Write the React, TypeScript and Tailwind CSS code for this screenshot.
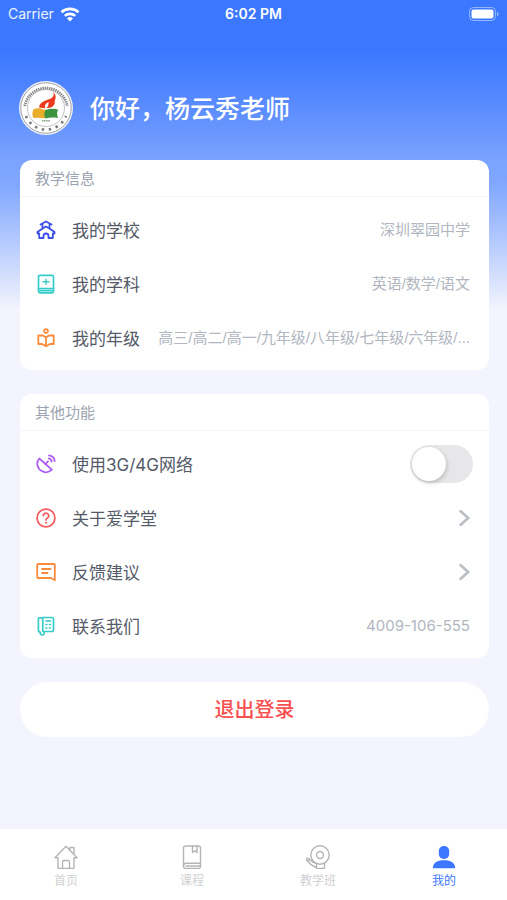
import type { ReactNode } from "react";

const stroke = {
  fill: "none",
  stroke: "currentColor",
  strokeLinecap: "round",
  strokeLinejoin: "round",
} as const;

function SchoolIcon() {
  return (
    <svg viewBox="0 0 20 20" className="size-5 text-[#3c4fe8]" strokeWidth="1.8" {...stroke}>
      <path d="M4.500 4.500 10 1.500l5.500 3M6.500 4.500v4L1.500 12v1.500h1.700V18h4.300v-2a2.500 2.500 0 0 1 5 0v2h4.300v-4.500h1.700V12l-5-3.500v-4" />
      <path d="m6.500 8.500 3.500-2 3.500 2" />
    </svg>
  );
}

function SubjectIcon() {
  return (
    <svg viewBox="0 0 20 20" className="size-5 text-[#35cdca]" strokeWidth="1.7" {...stroke}>
      <rect x="2.500" y="1.300" width="15" height="17.500" rx="1.500" />
      <path d="M2.500 14.500h15M4 16.700h12" />
      <path d="M10 5.300v5M7 7.800h6" strokeWidth="1.400" />
    </svg>
  );
}

function GradeIcon() {
  return (
    <svg viewBox="0 0 20 20" className="size-5 text-[#fb8b3c]" strokeWidth="1.8" {...stroke}>
      <circle cx="10" cy="3" r="1.900" />
      <path d="M10 9.500 7 7.500H2.300V16H6l4 2.300L14 16h3.700V7.500H13L10 9.500ZM10 9.500V18" />
    </svg>
  );
}

function DishIcon() {
  return (
    <svg viewBox="0 0 20 20" className="size-5 text-[#ad5cf5]" strokeWidth="1.8" {...stroke}>
      <path d="M3.300 4.500a8 8 0 0 0 3 12.700 8 8 0 0 0 9.500-1.500L3.300 4.500Z" />
      <path d="m9.500 10 2.500-2.600" />
      <path d="M12.700 4.300a4 4 0 0 1 3 3.200M13 1.300a6.500 6.500 0 0 1 5.700 5.800" />
    </svg>
  );
}

function QuestionIcon() {
  return (
    <svg viewBox="0 0 20 20" className="size-5 text-[#f8595c]" strokeWidth="1.7" {...stroke}>
      <circle cx="10" cy="10" r="8.900" />
      <path d="M7.200 7.700a2.800 2.600 0 1 1 4.300 2.200c-.9.6-1.500 1-1.500 2.100" />
      <path d="M10 14.700v.1" strokeWidth="2" />
    </svg>
  );
}

function FeedbackIcon() {
  return (
    <svg viewBox="0 0 20 20" className="size-5 text-[#fb8b3c]" strokeWidth="1.8" {...stroke}>
      <path d="M18.800 18.300V3a1 1 0 0 0-1-1H2.200a1 1 0 0 0-1 1v12a1 1 0 0 0 1 1H15l3.800 2.300Z" />
      <path d="M6 7h8.500M6 11h5.500" />
    </svg>
  );
}

function PhoneIcon() {
  return (
    <svg viewBox="0 0 20 20" className="size-5 text-[#35cdca]" strokeWidth="1.7" {...stroke}>
      <path d="M7 1.500h9A1.500 1.500 0 0 1 17.500 3v11a1.500 1.500 0 0 1-1.500 1.500H8.500" />
      <path d="M3.200 1.800h2.600a1 1 0 0 1 1 1v12.700c2 .3 2 3.500-.6 3.500-1.700 0-2-1.500-1.900-2.700-1.300-.2-1.900-1-1.900-2.300V2.800a1 1 0 0 1 .8-1Z" />
      <path d="M10 5h4.500" />
      <path d="M10 8.500h.8M13.500 8.500h.8M10 12h.8M13.500 12h.8" />
    </svg>
  );
}

function Chevron() {
  return (
    <svg viewBox="0 0 12 18" className="h-[18px] w-3 text-[#bcbfc6]" strokeWidth="2.8" {...stroke}>
      <path d="m2.700 2.200 7.500 6.800-7.500 6.800" />
    </svg>
  );
}

function HomeIcon() {
  return (
    <svg viewBox="0 0 24 24" className="size-6" strokeWidth="1.4" {...stroke}>
      <path d="M4 12.700v9.800a1 1 0 0 0 1 1h14a1 1 0 0 0 1-1v-9.800M4 12.700H1L12 1.300l11 11.400h-3M16 5.300V2.500h4v7" />
      <path d="M8.500 23.500V17a1.500 1.500 0 0 1 1.500-1.500h4a1.500 1.500 0 0 1 1.500 1.500v6.500" />
    </svg>
  );
}

function CourseIcon() {
  return (
    <svg viewBox="0 0 24 24" className="size-6" strokeWidth="1.4" {...stroke}>
      <rect x="3.500" y="1" width="17" height="22.500" rx="2" />
      <path d="M12.500 1v6.500l2.300-1.700L17 7.500V1M6 18.300h14.500M6 21h14M3.500 20.700A2.500 2.500 0 0 1 6 18.300" />
    </svg>
  );
}

function BellIcon() {
  return (
    <svg viewBox="0 0 24 24" className="size-6" strokeWidth="1.4" {...stroke}>
      <circle cx="14" cy="10" r="9.200" />
      <circle cx="14" cy="10" r="3.500" />
      <path d="M10.500 18.700v4.800h8v-4.800M10.500 22.500C7 21.500 4 19 1.700 16M10.500 18.500A13 13 0 0 1 3.500 14.500" />
      <circle cx="1.800" cy="14.500" r="1.300" />
    </svg>
  );
}

function UserIcon() {
  return (
    <svg viewBox="0 0 24 24" className="size-6" fill="currentColor">
      <rect x="6.800" y="1" width="10.400" height="13" rx="5" />
      <path d="M.8 23.300c0-5.500 4.500-8 11.200-8s11.200 2.500 11.200 8Z" />
    </svg>
  );
}

function Avatar() {
  return (
    <svg viewBox="0 0 54 54" className="size-[54px] shrink-0" role="img" aria-label="校徽">
      <circle cx="27" cy="27" r="27" fill="#eef1f8" />
      <circle cx="27" cy="27" r="25.200" fill="#fff" stroke="#8e8e94" strokeWidth=".8" />
      <circle cx="27" cy="27" r="18.500" fill="none" stroke="#a9a9ae" strokeWidth=".7" />
      <path d="M5.800 25A21.500 21.500 0 0 1 48.200 25" fill="none" stroke="#85858a" strokeWidth="2.800" strokeDasharray="1.400 .8" />
      <path d="M7 35A21.500 21.500 0 0 0 47 35" fill="none" stroke="#77777c" strokeWidth="2.600" strokeDasharray="2.400 4.700" />
      <path d="M34 11c2 3.800-.5 6-4 7.300-4.500 1.500-10 3.500-9.800 8.200l6 .7c-.8-3 .4-5.200 3.700-6.200-1 2.500.2 4-2.500 5.900 6 .5 9.200-3.100 8.300-7.200 1.500-2.700 1.500-6.500-1.700-8.700Z" fill="#ed3820" />
      <path d="M14.500 28.300c3-1.500 7-1.200 10 .3h2v8.500l-2 .2c-4-1-7-.6-10-.4-1.500-2.500-1.500-5.500 0-8.600Z" fill="#e9ad2b" />
      <path d="M26.500 29c4-1.600 8-1.400 12.700-.5-1.500 2.700-1.500 5.700 0 8.500-4.700-.7-8.700-.7-12.700.6-1.600-2.800-1.600-5.800 0-8.600Z" fill="#3d9440" />
      <path d="M23 39.700h8" stroke="#7fa780" strokeWidth="1.500" strokeDasharray="1.500 .6" />
    </svg>
  );
}

function StatusBar() {
  return (
    <div className="grid h-7 grid-cols-3 items-center px-2 text-sm">
      <div className="flex items-center gap-1.5 text-white/90">
        <span>Carrier</span>
        <svg viewBox="0 0 20 15" className="h-[15px] w-5" fill="none" stroke="#fff" strokeWidth="2.600">
          <path d="M1.500 5.300a12.300 12.300 0 0 1 17 0M4.800 8.900a7.600 7.600 0 0 1 10.400 0" />
          <path d="M10 14.500 7 11.500a4.300 4.300 0 0 1 6 0Z" fill="#fff" stroke="none" />
        </svg>
      </div>
      <span className="text-center font-semibold">6:02 PM</span>
      <svg viewBox="0 0 30 14" className="h-3.5 w-[30px] justify-self-end">
        <rect x=".5" y=".5" width="26" height="13" rx="4" fill="none" stroke="#fff" strokeOpacity=".45" />
        <rect x="2.500" y="2.500" width="22" height="9" rx="2" fill="#fff" />
        <path d="M28 4.700c2 .8 2 3.800 0 4.600Z" fill="#fff" fillOpacity=".5" />
      </svg>
    </div>
  );
}

function Card({ title, children }: { title: string; children: ReactNode }) {
  return (
    <section className="rounded-xl bg-white pb-[5px]">
      <h2 className="border-b border-[#f3f4f6] px-[15px] pt-px text-[15px] leading-[35px] text-[#9ca3b0]">{title}</h2>
      <div className="pt-1.5">{children}</div>
    </section>
  );
}

const row = "flex h-[54px] w-full items-center pl-4 pr-[19px] text-left";
const label = "ml-4 shrink-0 pt-px text-[17px] leading-7 text-[#555a68]";
const value = "ml-3 min-w-0 flex-1 truncate text-right text-[15px] leading-6 text-[#b1b6c0]";

function InfoRow({ icon, name, children }: { icon: ReactNode; name: string; children: ReactNode }) {
  return (
    <div className={row}>
      {icon}
      <span className={label}>{name}</span>
      <span className={value}>{children}</span>
    </div>
  );
}

function LinkRow({ icon, name }: { icon: ReactNode; name: string }) {
  return (
    <button type="button" className={row}>
      {icon}
      <span className={label}>{name}</span>
      <span className="flex-1" />
      <Chevron />
    </button>
  );
}

const slashList = "font-['Liberation_Sans','Noto_Sans_CJK_SC',sans-serif]";

const tabs = [
  { name: "首页", icon: <HomeIcon /> },
  { name: "课程", icon: <CourseIcon /> },
  { name: "教学班", icon: <BellIcon /> },
  { name: "我的", icon: <UserIcon />, active: true },
];

export default function App() {
  return (
    <div className="flex min-h-screen flex-col bg-[#f3f4fd] bg-[linear-gradient(#3b78ff_0px,#3b78ff_50px,#5085ff_90px,#7ba3ff_160px,#81a7ff_185px,#f3f4fd_310px)] font-['Inter','Noto_Sans_CJK_SC',sans-serif]">
      <header className="text-white">
        <StatusBar />
        <div className="flex items-center gap-[17px] px-[19px] pt-[53px] pb-[25px]">
          <Avatar />
          <h1 className="pt-0.5 text-[25px] leading-8 font-medium">你好，杨云秀老师</h1>
        </div>
      </header>

      <main className="flex flex-col gap-6 pr-[18px] pb-6 pl-5">
        <Card title="教学信息">
          <InfoRow icon={<SchoolIcon />} name="我的学校">
            深圳翠园中学
          </InfoRow>
          <InfoRow icon={<SubjectIcon />} name="我的学科">
            <span className={slashList}>英语/数学/语文</span>
          </InfoRow>
          <InfoRow icon={<GradeIcon />} name="我的年级">
            <span className={slashList}>高三/高二/高一/九年级/八年级/七年级/六年级/...</span>
          </InfoRow>
        </Card>

        <Card title="其他功能">
          <label className="flex h-[54px] items-center px-4">
            <DishIcon />
            <span className={label}>使用3G/4G网络</span>
            <input
              type="checkbox"
              role="switch"
              className="ml-auto h-[38px] w-[63px] appearance-none rounded-full bg-[#e7e7e9] p-0.5 before:block before:size-[34px] before:rounded-full before:bg-white before:shadow-[1px_2px_4px_rgba(0,0,0,0.18)] checked:bg-[#3b78ff] checked:before:ml-auto"
            />
          </label>
          <LinkRow icon={<QuestionIcon />} name="关于爱学堂" />
          <LinkRow icon={<FeedbackIcon />} name="反馈建议" />
          <InfoRow icon={<PhoneIcon />} name="联系我们">
            4009-106-555
          </InfoRow>
        </Card>

        <button type="button" className="h-[55px] rounded-full bg-white pt-px text-xl font-medium text-[#f9504f]">
          退出登录
        </button>
      </main>

      <nav className="mt-auto grid h-[71px] grid-cols-4 bg-white pl-[3px]">
        {tabs.map((tab) => (
          <a
            key={tab.name}
            href="#"
            className={`flex flex-col items-center gap-0.5 pt-4 text-xs leading-5 ${tab.active ? "text-[#3b78ff]" : "text-[#b5b5b8]"}`}
          >
            {tab.icon}
            <span className={tab.active ? "" : "text-[#cfd0d3]"}>{tab.name}</span>
          </a>
        ))}
      </nav>
    </div>
  );
}
